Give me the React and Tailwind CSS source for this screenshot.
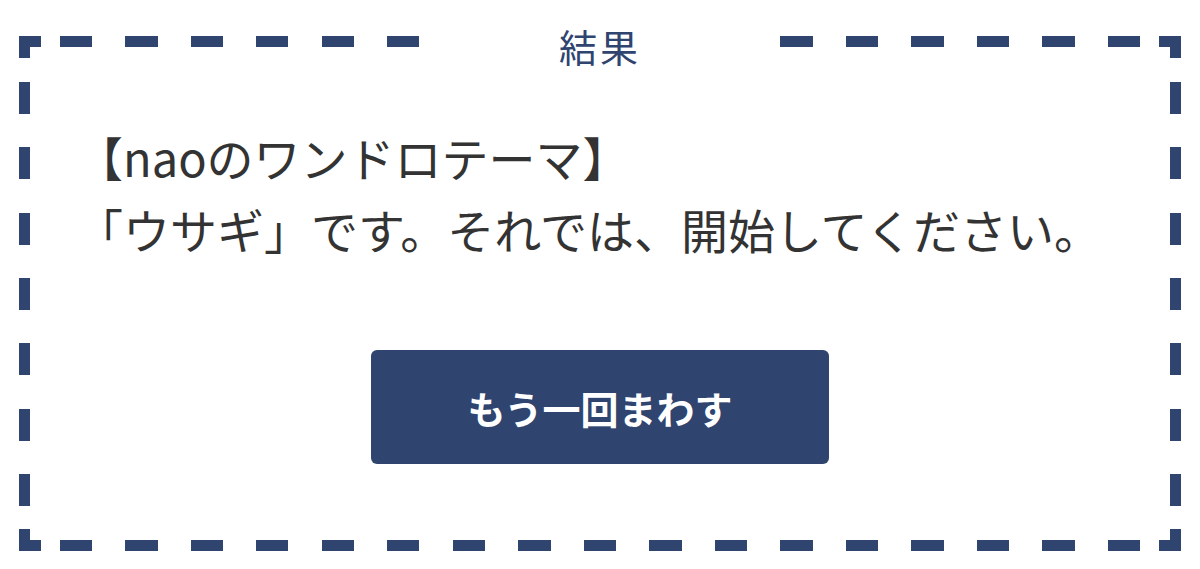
export default function App() {
  return (
    <div className="w-full h-[569px] bg-white pt-9 px-[19px]" style={{ fontFamily: '"Noto Sans CJK JP", "Noto Sans", sans-serif' }}>
      <section className="relative w-[1162px] h-[515px] pt-[85px] pl-[57px] bg-no-repeat [background-image:linear-gradient(#2f446f,#2f446f),linear-gradient(#2f446f,#2f446f),linear-gradient(#2f446f,#2f446f),linear-gradient(#2f446f,#2f446f),linear-gradient(#2f446f,#2f446f),linear-gradient(#2f446f,#2f446f),linear-gradient(#2f446f,#2f446f),linear-gradient(#2f446f,#2f446f),repeating-linear-gradient(to_right,#2f446f_0_32px,transparent_32px_65.5px),repeating-linear-gradient(to_right,#2f446f_0_32px,transparent_32px_65.5px),repeating-linear-gradient(to_bottom,#2f446f_0_32px,transparent_32px_65.33px),repeating-linear-gradient(to_bottom,#2f446f_0_32px,transparent_32px_65.33px)] [background-size:22px_11px,22px_11px,22px_11px,22px_11px,11px_22px,11px_22px,11px_22px,11px_22px,1080px_11px,1080px_11px,11px_424px,11px_424px] [background-position:0_0,100%_0,0_100%,100%_100%,0_0,100%_0,0_100%,100%_100%,41px_0,41px_100%,0_46px,100%_46px]">
        <h2 className="absolute -top-4 left-1/2 -translate-x-1/2 w-[360px] bg-white text-center text-[38px] leading-[51px] tracking-[3px] text-[#2f446f]">結果</h2>
        <div className="text-[47px] leading-[72px] text-[#333333]">
          <p>【naoのワンドロテーマ】</p>
          <p>「ウサギ」です。それでは、開始してください。</p>
        </div>
        <div className="flex justify-center pr-[57px] mt-[85px]">
          <button className="w-[458px] h-[114px] rounded-md bg-[#2f446f] text-white text-[38px] font-bold">もう一回まわす</button>
        </div>
      </section>
    </div>
  );
}
